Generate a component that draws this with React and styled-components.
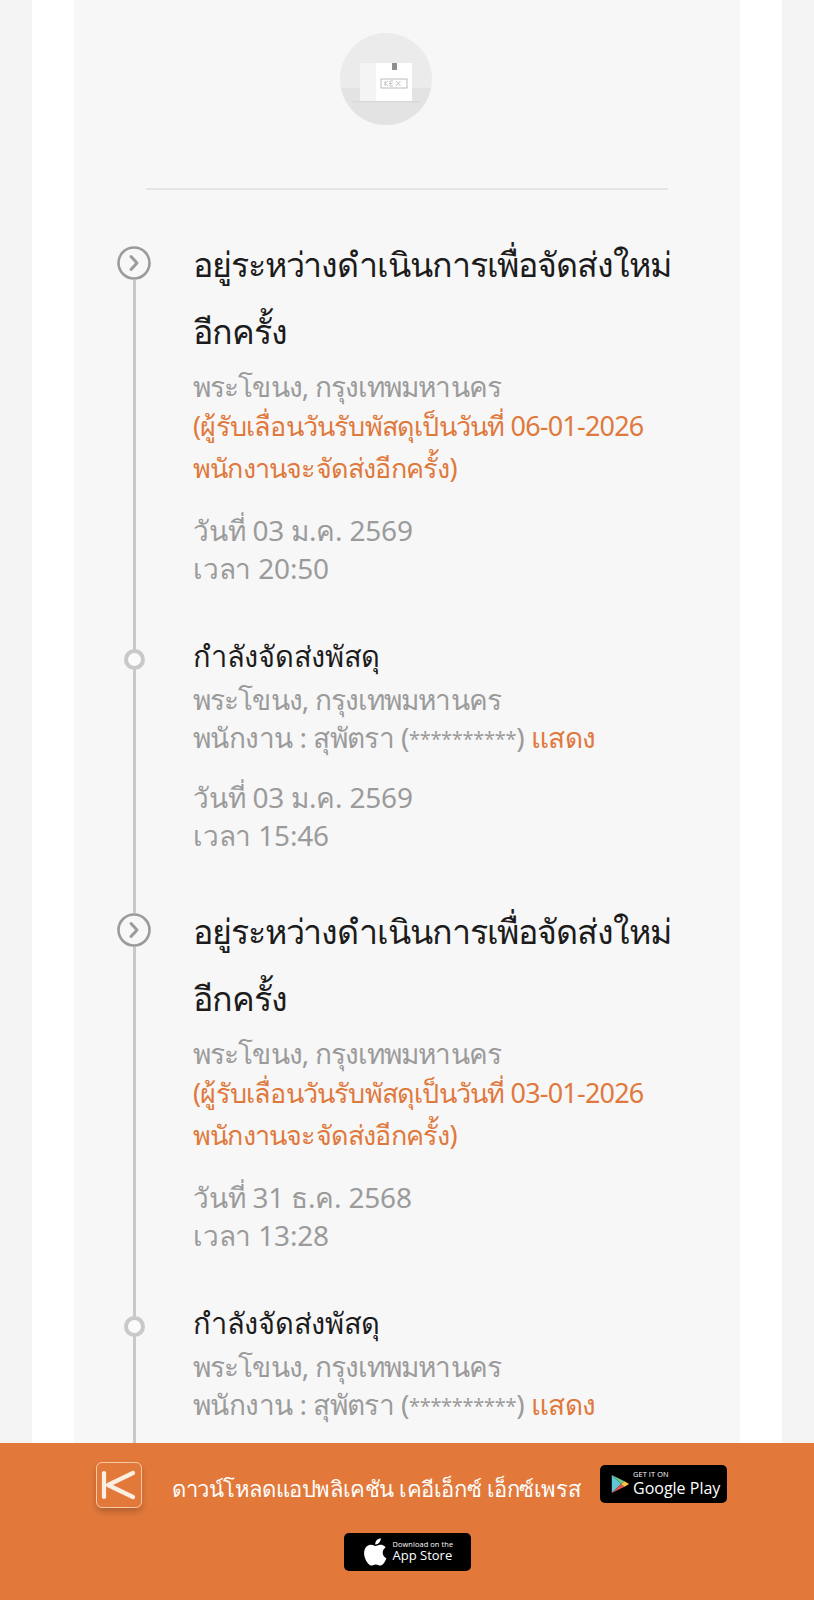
import React from 'react';
import styled, { createGlobalStyle } from 'styled-components';

const Global = createGlobalStyle`
  html, body { margin: 0; padding: 0; background: #f4f4f4; }
  body { font-family: "Noto Sans", "Liberation Sans", sans-serif; height: 1600px; overflow: hidden; }
`;
const Page = styled.div`height: 1600px; overflow: hidden; padding: 0 32px; box-sizing: border-box;`;
const Sheet = styled.main`background: #fff; padding: 0 42px; height: 1600px; box-sizing: border-box;`;
const Panel = styled.section`background: #f7f7f7; height: 1600px; padding: 33px 0 0; box-sizing: border-box; overflow: hidden;`;
const Avatar = styled.div`
  width: 92px; height: 92px; border-radius: 50%; margin: 0 0 0 266px; overflow: hidden;
  svg { display: block; }
`;
const Divider = styled.hr`border: 0; height: 2px; background: #e4e4e4; margin: 63px 72px 0 72px;`;
const Timeline = styled.ol`list-style: none; margin: 0; padding: 0; position: relative;`;
const Step = styled.li`
  position: relative; padding-left: 119px; padding-right: 20px;
  padding-top: ${p => p.$top}px; padding-bottom: ${p => p.$bottom}px;
  &::before { content: ""; position: absolute; left: 59px; top: ${p => p.$lineTop}px; bottom: 0; width: 3px; background: #c9c9c9; }
`;
const Marker = styled.span`
  position: absolute; left: 43px; top: ${p => p.$top}px; width: 34px; height: 34px; background: #f7f7f7; border-radius: 50%; display: block;
  svg { display: block; }
`;
const Dot = styled.span`
  position: absolute; left: 50px; top: ${p => p.$top}px; width: 21px; height: 21px; box-sizing: border-box;
  border: 4px solid #c9c9c9; background: #fbfbfb; border-radius: 50%; display: block;
`;
const BigTitle = styled.h2`margin: 0 0 2px; font-weight: 400; font-size: 34px; letter-spacing: -1.1px; line-height: 67px; color: #1c1c1c; white-space: nowrap;`;
const SmallTitle = styled.h3`margin: 0; font-weight: 400; font-size: 29px; letter-spacing: -.3px; line-height: 49px; color: #1c1c1c;`;
const Place = styled.p`margin: 0; font-size: 28px; letter-spacing: -.9px; line-height: 38px; color: #9b9b9b; white-space: nowrap;`;
const Staff = styled(Place)`letter-spacing: -.55px;`;
const Note = styled.p`margin: 0; font-size: 27px; letter-spacing: -.8px; line-height: 42px; color: #e0793d; white-space: nowrap;`;
const When = styled.p`margin: ${p => p.$gap}px 0 0; font-size: 28px; letter-spacing: -.2px; line-height: 38px; color: #9b9b9b;`;
const Time = styled.p`margin: 0; font-size: 28px; letter-spacing: -.2px; line-height: 38px; color: #9b9b9b;`;
const Show = styled.span`color: #e0793d;`;
const Stars = styled.span`font-size: 20px; letter-spacing: -.3px; vertical-align: 2px;`;
const Banner = styled.footer`
  position: fixed; left: 0; right: 0; bottom: 0; height: 157px; background: #e2793b;
  display: flex; flex-direction: column; align-items: center;
`;
const BannerRow = styled.div`display: flex; align-items: center; margin-top: 19px; margin-left: 9px; height: 46px;`;
const AppIcon = styled.div`
  width: 46px; height: 46px; border-radius: 6px; border: 1.5px solid #f9c9a3; box-shadow: 0 4px 6px rgba(0,0,0,.2);
  box-sizing: border-box; margin-right: 30px; svg { display: block; }
`;
const BannerText = styled.span`font-size: 22px; letter-spacing: -.42px; color: #fff; white-space: nowrap; width: 406px; margin-right: 22px; line-height: 40px; margin-top: 6px;`;
const Store = styled.div`
  width: 127px; height: 38px; background: #000; border-radius: 5px; color: #fff;
  display: flex; align-items: center; box-sizing: border-box; font-family: "Open Sans", sans-serif;
`;
const AppStore = styled(Store)`margin-top: 25px; padding-left: 16px; gap: 1px;`;
const PlayStore = styled(Store)`padding-left: 10px; gap: 3px; margin-top: -2px;`;
const StoreText = styled.div`display: flex; flex-direction: column; line-height: 1;`;
const StoreTiny = styled.span`font-size: 7.4px; letter-spacing: .1px;`;
const StoreName = styled.span`font-size: ${p => p.$size}px; line-height: ${p => p.$lh}px; font-weight: ${p => p.$weight};`;

const Big = ({ first, note, date, time }) => (
  <Step $top={first ? 41 : 44} $bottom={18} $lineTop={first ? 59 : 0}>
    <Marker $top={first ? 56 : 59}>
      <svg width="34" height="34" viewBox="0 0 34 34" fill="none" stroke="#9b9b9b">
        <circle cx="17" cy="17" r="15.5" strokeWidth="2.6" />
        <path d="M14 10.500 L20 17 L14 23.500" strokeWidth="3" strokeLinecap="round" strokeLinejoin="round" />
      </svg>
    </Marker>
    <BigTitle>อยู่ระหว่างดำเนินการเพื่อจัดส่งใหม่<br />อีกครั้ง</BigTitle>
    <Place>พระโขนง, กรุงเทพมหานคร</Place>
    <Note>(ผู้รับเลื่อนวันรับพัสดุเป็นวันที่ {note}<br />พนักงานจะจัดส่งอีกครั้ง)</Note>
    <When $gap={22}>{date}</When>
    <Time>{time}</Time>
  </Step>
);
const Small = ({ date, time, bottom = 0 }) => (
  <Step $top={26} $bottom={bottom} $lineTop={0}>
    <Dot $top={44} />
    <SmallTitle>กำลังจัดส่งพัสดุ</SmallTitle>
    <Place>พระโขนง, กรุงเทพมหานคร</Place>
    <Staff>พนักงาน : สุพัตรา (<Stars>**********</Stars>) <Show>แสดง</Show></Staff>
    {date && <When $gap={20}>{date}</When>}
    {time && <Time>{time}</Time>}
  </Step>
);

export default function App() {
  return (
    <Page>
      <Global />
      <Sheet>
        <Panel>
          <Avatar>
            <svg width="92" height="92" viewBox="0 0 92 92">
              <rect width="92" height="92" fill="#ebebeb" />
              <rect y="55" width="92" height="37" fill="#e3e3e3" />
              <rect x="20" y="30" width="52" height="38" fill="#f4f4f4" />
              <rect x="36" y="30" width="36" height="38" fill="#ffffff" />
              <rect x="13" y="68" width="67" height="1.500" fill="#d9d9d9" />
              <rect x="52" y="30" width="5" height="7" fill="#8f8f8f" />
              <rect x="41" y="46" width="26" height="9" fill="#fff" stroke="#aaa" strokeWidth=".8" />
              <path d="M45 48v5M45 50.500l3-2.500M45 50.500l3 2.500M53 48h-3v5h3M50 50.500h2.500M56 48l4.500 5M60.500 48l-4.500 5" fill="none" stroke="#aaa" strokeWidth=".7" />
            </svg>
          </Avatar>
          <Divider />
          <Timeline>
            <Big first note="06-01-2026" date="วันที่ 03 ม.ค. 2569" time="เวลา 20:50" />
            <Small date="วันที่ 03 ม.ค. 2569" time="เวลา 15:46" />
            <Big note="03-01-2026" date="วันที่ 31 ธ.ค. 2568" time="เวลา 13:28" />
            <Small bottom={60} />
          </Timeline>
        </Panel>
      </Sheet>
      <Banner>
        <BannerRow>
          <AppIcon>
            <svg width="43" height="43" viewBox="0 0 43 43" fill="none" stroke="#fdeee2" strokeWidth="4.200" strokeLinecap="round" strokeLinejoin="round">
              <path d="M7 10 V34" />
              <path d="M36 10 L11 22 L36 34" />
            </svg>
          </AppIcon>
          <BannerText>ดาวน์โหลดแอปพลิเคชัน เคอีเอ็กซ์ เอ็กซ์เพรส</BannerText>
          <PlayStore>
            <svg width="20" height="22" viewBox="0 0 22 22">
              <path d="M2 1 L12 11 L2 21 Z" fill="#5fc6d8" />
              <path d="M2 1 L16 8 L12 11 Z" fill="#6dc58b" />
              <path d="M2 21 L16 14 L12 11 Z" fill="#e2574c" />
              <path d="M16 8 L21 11 L16 14 L12 11 Z" fill="#f6c544" />
            </svg>
            <StoreText>
              <StoreTiny>GET IT ON</StoreTiny>
              <StoreName $size={16} $lh={18} $weight={500}>Google Play</StoreName>
            </StoreText>
          </PlayStore>
        </BannerRow>
        <AppStore>
          <svg width="32" height="32" viewBox="0 0 24 24" fill="#fff">
            <path d="M17.05 12.54c-.03-2.6 2.12-3.85 2.22-3.91-1.21-1.77-3.09-2.01-3.76-2.04-1.6-.16-3.12.94-3.93.94-.81 0-2.06-.92-3.39-.89-1.74.03-3.35 1.01-4.25 2.57-1.81 3.14-.46 7.8 1.3 10.35.86 1.25 1.89 2.65 3.24 2.6 1.3-.05 1.79-.84 3.36-.84 1.57 0 2.01.84 3.39.81 1.4-.02 2.28-1.27 3.14-2.53.99-1.45 1.4-2.86 1.42-2.93-.03-.01-2.72-1.04-2.74-4.13zM14.47 4.9c.72-.87 1.2-2.08 1.07-3.28-1.03.04-2.28.69-3.02 1.55-.66.77-1.24 2-1.09 3.18 1.15.09 2.33-.58 3.04-1.45z" />
          </svg>
          <StoreText>
            <StoreTiny>Download on the</StoreTiny>
            <StoreName $size={13} $lh={15} $weight={400}>App Store</StoreName>
          </StoreText>
        </AppStore>
      </Banner>
    </Page>
  );
}
